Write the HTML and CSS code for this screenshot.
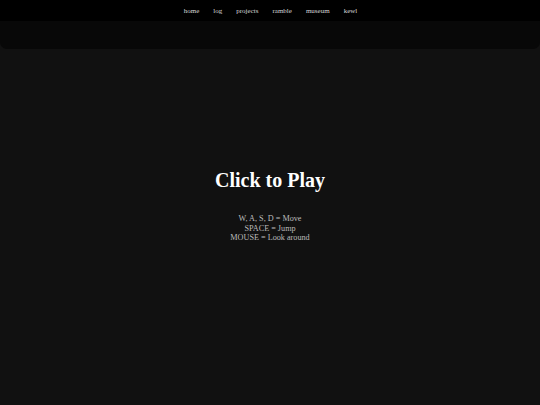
FILE: index.html
```html
<!DOCTYPE html>
<html>
<head>
<meta charset="utf-8">
<link rel="stylesheet" href="styles.css">
</head>
<body>
<nav class="nav">
  <a href="#">home</a>
  <a href="#">log</a>
  <a href="#">projects</a>
  <a href="#">ramble</a>
  <a href="#">museum</a>
  <a href="#">kewl</a>
</nav>
<div class="band"></div>
<main class="stage">
  <div class="overlay">
    <h1 class="title">Click to Play</h1>
    <div class="help">
      <div>W, A, S, D = Move</div>
      <div>SPACE = Jump</div>
      <div>MOUSE = Look around</div>
    </div>
  </div>
</main>
</body>
</html>
```
FILE: styles.css
```css
html, body {
  margin: 0;
  padding: 0;
  background: #111111;
  height: 100%;
  overflow: hidden;
  font-family: "Liberation Serif", "Times New Roman", serif;
}
.nav {
  height: 21px;
  background: #000;
  display: flex;
  justify-content: center;
  align-items: center;
  gap: 14px;
  padding-left: 1px;
}
.nav a {
  color: #d8d8d8;
  text-decoration: none;
  font-size: 7px;
}
.band {
  height: 28px;
  background: #080808;
  border-radius: 0 0 7px 7px;
}
.stage {
  height: 356px;
  display: flex;
  justify-content: center;
}
.overlay {
  text-align: center;
  padding-top: 119px;
}
.title {
  margin: 0;
  color: #fff;
  font-size: 20px;
  font-weight: bold;
  line-height: 24px;
}
.help {
  margin-top: 22px;
  color: #bbbbbb;
  font-size: 8.2px;
  line-height: 9.5px;
}
```
